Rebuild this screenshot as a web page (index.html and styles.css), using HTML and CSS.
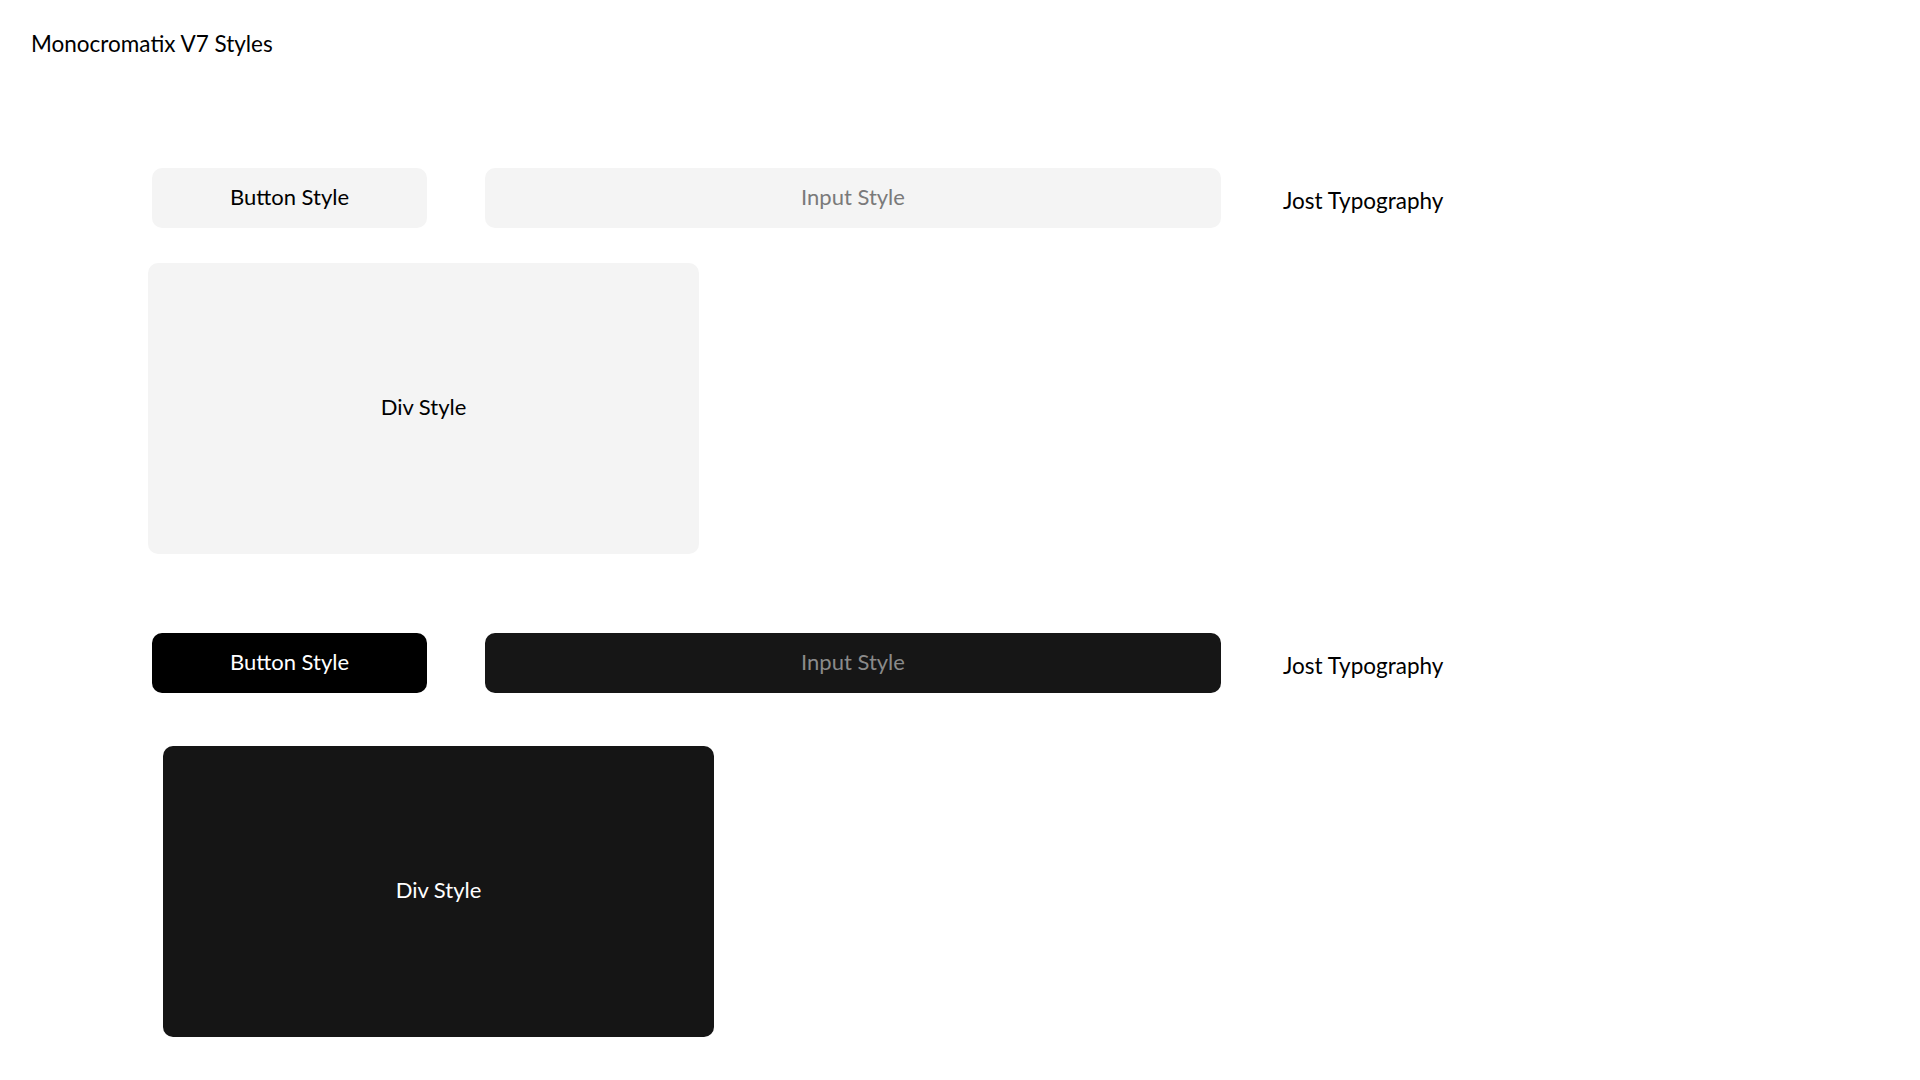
FILE: index.html
```html
<!DOCTYPE html>
<html lang="en">
<head>
<meta charset="utf-8">
<title>Monocromatix V7 Styles</title>
<link rel="stylesheet" href="styles.css">
</head>
<body>
  <h1 class="page-title">Monocromatix V7 Styles</h1>
  <main class="showcase">
    <section class="theme theme-light">
      <div class="controls">
        <button class="btn">Button Style</button>
        <input class="field" type="text" placeholder="Input Style">
        <p class="type-sample">Jost Typography</p>
      </div>
      <div class="panel">Div Style</div>
    </section>
    <section class="theme theme-dark">
      <div class="controls">
        <button class="btn">Button Style</button>
        <input class="field" type="text" placeholder="Input Style">
        <p class="type-sample">Jost Typography</p>
      </div>
      <div class="panel">Div Style</div>
    </section>
  </main>
</body>
</html>
```
FILE: styles.css
```css
* { box-sizing: border-box; }

html, body {
  margin: 0;
  padding: 0;
  background: #ffffff;
  color: #000000;
  font-family: "Lato", "Inter", sans-serif;
}

.page-title {
  margin: 0;
  padding: 29px 0 0 31px;
  font-size: 22.5px;
  font-weight: 400;
  line-height: 30px;
}

.showcase {
  display: flex;
  flex-direction: column;
  padding-left: 152px;
}

.theme {
  display: flex;
  flex-direction: column;
}

.theme-light { margin-top: 109px; }
.theme-dark { margin-top: 79px; }

.controls {
  display: flex;
  align-items: center;
  height: 60px;
}

.btn {
  width: 275px;
  height: 60px;
  border: none;
  border-radius: 10px;
  font-family: inherit;
  font-size: 22px;
  cursor: pointer;
  padding: 0 0 4px 0;
}

.field {
  width: 736px;
  height: 60px;
  margin-left: 58px;
  border: none;
  border-radius: 10px;
  font-family: inherit;
  font-size: 22px;
  text-align: center;
  outline: none;
  padding: 0 0 4px 0;
}

.type-sample {
  margin: 6px 0 0 62px;
  font-size: 22.5px;
  line-height: 30px;
}

.panel {
  display: flex;
  align-items: center;
  justify-content: center;
  width: 551px;
  height: 291px;
  padding-bottom: 5px;
  border-radius: 10px;
  font-size: 22px;
}

.theme-light .btn { background: #f4f4f4; color: #000; }
.theme-light .field { background: #f4f4f4; }
.theme-light .field::placeholder { color: #7a7a7a; }
.theme-light .panel { background: #f4f4f4; color: #000; margin-top: 35px; margin-left: -4px; }

.theme-dark .btn { background: #000000; color: #ffffff; }
.theme-dark .field { background: #161616; }
.theme-dark .field::placeholder { color: #8a8a8a; }
.theme-dark .panel { background: #151515; color: #ffffff; margin-top: 53px; margin-left: 11px; }
```
